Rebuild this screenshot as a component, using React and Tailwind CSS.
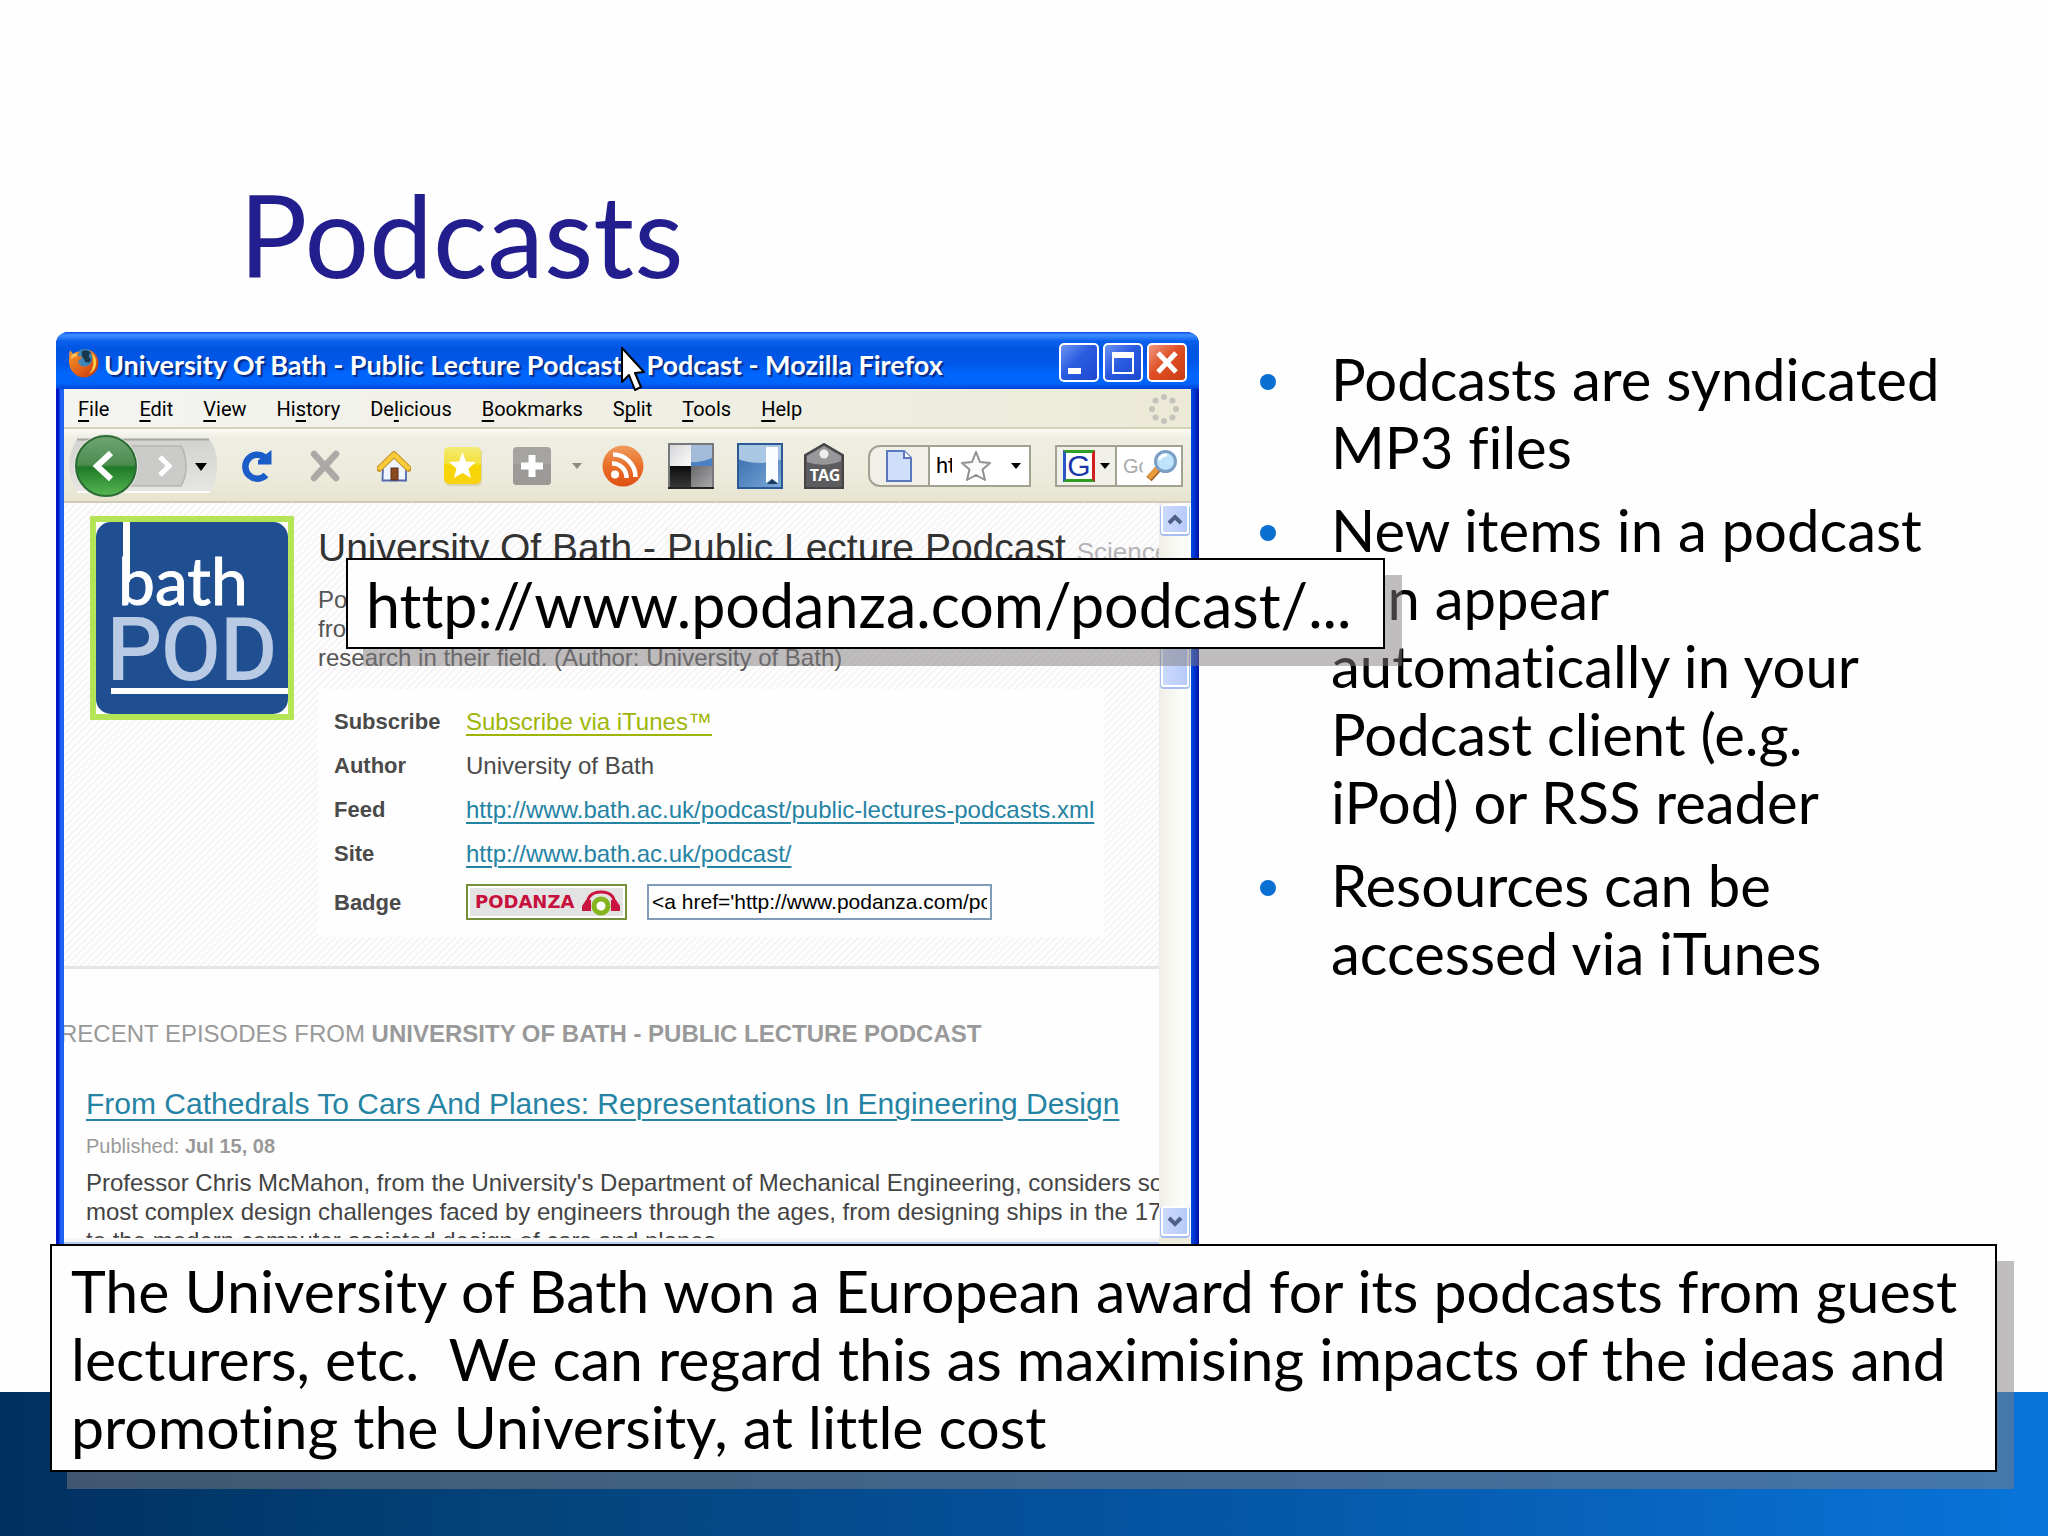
import React from "react";

const slideFont = "font-['Lato',sans-serif] [font-variant-ligatures:none]";
const pageFont = "font-['Liberation_Sans',sans-serif]";

const menus = [
  ["", "F", "ile"],
  ["", "E", "dit"],
  ["", "V", "iew"],
  ["Hi", "s", "tory"],
  ["De", "l", "icious"],
  ["", "B", "ookmarks"],
  ["S", "p", "lit"],
  ["", "T", "ools"],
  ["", "H", "elp"],
];

const bullets = [
  "Podcasts are syndicated MP3 files",
  "New items in a podcast can appear automatically in your Podcast client (e.g. iPod)\u00a0or RSS reader",
  "Resources can be accessed via iTunes",
];

function FirefoxIcon() {
  return (
    <svg viewBox="0 0 32 32" className="h-8 w-8" aria-hidden="true">
      <defs>
        <linearGradient id="fox" x1="0" y1="0" x2="1" y2="1">
          <stop offset="0" stopColor="#f59a2c" />
          <stop offset=".55" stopColor="#e2601a" />
          <stop offset="1" stopColor="#b9330c" />
        </linearGradient>
      </defs>
      <circle cx="17" cy="14" r="12" fill="#3d86b8" />
      <path d="M14 4 q6 -2 9 2 q-3 1 -2 4 q3 2 1 5 q-5 2 -6 -3 q-3 -3 -2 -8z" fill="#17384f" />
      <path d="M2 3 L5 7 Q8 4 12 5 Q9 7 10 9 L14 10 Q14 12 11 13 Q9 15 12 18 Q16 21 21 18 Q25 15 24 9 Q23 5 21 3 Q29 6 30.500 14 Q31 23 24 28 Q16 33 8 28 Q0 22 1 12 Q1 7 2 3z" fill="url(#fox)" />
      <path d="M24 6 Q29 11 28 18 Q27 24 21 27 Q28 19 24 6z" fill="#fbd04a" />
      <path d="M3 12 Q3 8 5 7 Q7 6 9 7 L9 9 Q5 10 3 12z" fill="#fbc35a" />
    </svg>
  );
}

function Cursor() {
  return (
    <svg viewBox="0 0 24 46" className="h-[46px] w-6" aria-hidden="true">
      <path d="M1 1 L1 35 L8 28 L14 43 L20 40 L14 26 L23 25z" fill="#fff" stroke="#000" strokeWidth="2" strokeLinejoin="round" />
    </svg>
  );
}

function TitleBar() {
  const box = "flex h-[39px] w-10 items-center justify-center rounded-[5px] border-2 border-white";
  return (
    <div className="flex h-[57px] items-center bg-[linear-gradient(180deg,#0a4be6_0%,#3c8eff_5%,#2f80fb_9%,#0a60ee_16%,#0054e0_30%,#0058ea_55%,#0066ff_75%,#0064fa_90%,#0043d6_100%)] px-3 pt-1">
      <FirefoxIcon />
      <h2 className="flex gap-6 whitespace-pre pl-1 pt-1 text-[27px] font-bold leading-8 text-white [text-shadow:2px_2px_1px_#052a86]">
        <span>University Of Bath - Public Lecture Podcast</span>
        <span>Podcast - Mozilla Firefox</span>
      </h2>
      <div className="ml-auto flex gap-1">
        <button aria-label="Minimize" className={box + " bg-[linear-gradient(135deg,#6d93f5,#2a5ce0_45%,#1d48cf)]"}>
          <svg viewBox="0 0 36 35" className="h-full w-full"><rect x="7" y="23" width="13" height="6" fill="#fff" /></svg>
        </button>
        <button aria-label="Maximize" className={box + " bg-[linear-gradient(135deg,#6d93f5,#2a5ce0_45%,#1d48cf)]"}>
          <svg viewBox="0 0 36 35" className="h-full w-full"><path d="M8 9h20v19H8z" fill="none" stroke="#fff" strokeWidth="2" /><rect x="7" y="7" width="22" height="6" fill="#fff" /></svg>
        </button>
        <button aria-label="Close" className={box + " bg-[linear-gradient(135deg,#f09a80,#e04f26_45%,#c93d14)]"}>
          <svg viewBox="0 0 36 35" className="h-full w-full"><path d="M9 8 L27 27 M27 8 L9 27" stroke="#fff" strokeWidth="5" /></svg>
        </button>
      </div>
    </div>
  );
}

function Throbber() {
  const dots = [0, 1, 2, 3, 4, 5, 6, 7];
  return (
    <svg viewBox="0 0 32 32" className="ml-auto h-8 w-8" aria-hidden="true">
      {dots.map((n) => (
        <circle key={n} cx={16 + 12 * Math.cos((n * Math.PI) / 4)} cy={16 + 12 * Math.sin((n * Math.PI) / 4)} r="3" fill="#c4c3bb" />
      ))}
    </svg>
  );
}

function MenuBar() {
  return (
    <nav className="flex h-10 items-center gap-[30px] border-b-2 border-[#d5d2b8] bg-[linear-gradient(90deg,#f4f4f1,#efeee3_60%,#ecead6)] pl-[14px] pr-[11px] pt-[2px] font-['Roboto',sans-serif] text-xl text-black">
      {menus.map(([a, k, b]) => (
        <button key={a + k + b} className="leading-6">
          {a}
          <span className="underline decoration-2 underline-offset-4">{k}</span>
          {b}
        </button>
      ))}
      <Throbber />
    </nav>
  );
}

function Caret({ color }) {
  return <svg viewBox="0 0 10 6" className="h-[6px] w-[10px]" aria-hidden="true"><path d="M0 0h10L5 6z" fill={color} /></svg>;
}

function Toolbar() {
  return (
    <div className="flex h-[74px] items-center border-b-2 border-[#cfcbb8] bg-[linear-gradient(180deg,#fbfaf5_0%,#efeee4_12%,#eceada_70%,#e6e3cf_100%)] pl-1 pr-2 pt-[2px]">
      <button aria-label="Back and forward" className="h-16 w-[150px] shrink-0">
        <svg viewBox="0 0 150 64" className="h-full w-full">
          <defs>
            <linearGradient id="back" x1="0" y1="0" x2="0" y2="1">
              <stop offset="0" stopColor="#6fa574" /><stop offset=".48" stopColor="#4b8c4f" />
              <stop offset=".52" stopColor="#1f7a27" /><stop offset="1" stopColor="#56b852" />
            </linearGradient>
            <linearGradient id="pill" x1="0" y1="0" x2="0" y2="1">
              <stop offset="0" stopColor="#d2d2d0" /><stop offset="1" stopColor="#e6e6e2" />
            </linearGradient>
          </defs>
          <path d="M9 5 H141 Q149 14 149 31 Q149 48 142 58 H9 Q-7 32 9 5z" fill="url(#pill)" />
          <path d="M9 5.500 H141" stroke="#a5a5a2" strokeWidth="2" />
          <path d="M9 58 H142" stroke="#fbfbf8" strokeWidth="2" />
          <path d="M60 12 H113 Q118 20 118 32 Q118 44 113 52 H60z" fill="#cbcbc9" stroke="#b5b5b3" strokeWidth="1.500" />
          <path d="M92 23 L101 32 L92 41" fill="none" stroke="#fff" strokeWidth="5" />
          <circle cx="38" cy="32" r="32" fill="#e4e4e1" />
          <circle cx="38" cy="32" r="30" fill="url(#back)" stroke="#2c6b33" strokeWidth="2" />
          <path d="M43 19 L29 32 L43 45" fill="none" stroke="#fff" strokeWidth="6" />
          <path d="M127 29h12l-6 8z" fill="#000" />
        </svg>
      </button>
      <button aria-label="Reload" className="ml-[22px] shrink-0">
        <svg viewBox="0 0 32 32" className="h-8 w-8">
          <path d="M26 25 A12 12 0 1 1 24.500 7" fill="none" stroke="#1a5cc8" strokeWidth="6.500" />
          <path d="M31.500 0 V14.500 H18 V10.500z" fill="#1a5cc8" />
        </svg>
      </button>
      <button aria-label="Stop" className="ml-[38px] shrink-0">
        <svg viewBox="0 0 30 32" className="h-8 w-[30px]"><path d="M4 4 L26 28 M26 4 L4 28" stroke="#aaa9a5" strokeWidth="6.500" strokeLinecap="round" /></svg>
      </button>
      <button aria-label="Home" className="ml-[37px] shrink-0">
        <svg viewBox="0 0 34 32" className="h-8 w-[34px]">
          <path d="M6 16 L17 6 L29 16 V30.500 H5.500z" fill="#eff6ff" stroke="#4f67b0" strokeWidth="1.800" />
          <rect x="14" y="18" width="7" height="12" fill="#8a4b1e" stroke="#5c2f12" />
          <path d="M2.500 18.500 L17 4.500 L31.500 18.500" fill="none" stroke="#c8922a" strokeWidth="6.500" strokeLinejoin="round" strokeLinecap="round" />
          <path d="M3 18 L17 4.500 L31 18" fill="none" stroke="#f8cb3b" strokeWidth="4.500" strokeLinejoin="round" strokeLinecap="round" />
        </svg>
      </button>
      <button aria-label="Bookmark star" className="ml-[33px] shrink-0">
        <svg viewBox="0 0 38 40" className="h-10 w-[38px]">
          <defs><linearGradient id="gold" x1="0" y1="0" x2="0" y2="1"><stop offset="0" stopColor="#f3ea74" /><stop offset=".45" stopColor="#f4e13a" /><stop offset=".5" stopColor="#f6d500" /><stop offset="1" stopColor="#f9d312" /></linearGradient></defs>
          <rect x="1" y="2" width="37" height="38" rx="5" fill="#d9d4b0" />
          <rect x="0" y="1" width="37" height="37" rx="5" fill="url(#gold)" />
          <path d="M18.500 6 L22 15.500 L32 16 L24.500 22.500 L27 32 L18.500 27 L10 32 L12.500 22.500 L5 16 L15 15.500z" fill="#fff" />
        </svg>
      </button>
      <button aria-label="Add" className="ml-[31px] shrink-0">
        <svg viewBox="0 0 38 38" className="h-[38px] w-[38px]">
          <rect width="38" height="38" rx="4" fill="#a5a4a0" />
          <rect y="17" width="38" height="21" rx="4" fill="#9b9a96" />
          <path d="M19 8 V30 M8 19 H30" stroke="#fff" strokeWidth="7" />
        </svg>
      </button>
      <button aria-label="Add options" className="ml-[21px] shrink-0"><Caret color="#8d8d85" /></button>
      <button aria-label="Subscribe to feed" className="ml-5 shrink-0">
        <svg viewBox="0 0 42 42" className="h-[42px] w-[42px]">
          <defs><linearGradient id="rss" x1="0" y1="0" x2="0" y2="1"><stop offset="0" stopColor="#f09a5b" /><stop offset=".5" stopColor="#e9702a" /><stop offset="1" stopColor="#df4f12" /></linearGradient></defs>
          <circle cx="21" cy="21" r="20.500" fill="url(#rss)" />
          <circle cx="13" cy="29.500" r="4" fill="#fff" />
          <path d="M10 18.500 A14 14 0 0 1 24.500 33 M11 9.500 A22.500 22.500 0 0 1 33.500 32" fill="none" stroke="#fff" strokeWidth="4.500" />
        </svg>
      </button>
      <button aria-label="Delicious" className="ml-6 shrink-0">
        <svg viewBox="0 0 46 46" className="h-[46px] w-[46px]">
          <defs>
            <linearGradient id="dl1" x1="0" y1="0" x2="1" y2="1"><stop offset="0" stopColor="#d2d3d6" /><stop offset="1" stopColor="#fafafa" /></linearGradient>
            <linearGradient id="dl2" x1="0" y1="0" x2="0" y2="1"><stop offset="0" stopColor="#0c0c0d" /><stop offset="1" stopColor="#3c3c3f" /></linearGradient>
            <linearGradient id="dl3" x1="0" y1="0" x2="1" y2="1"><stop offset="0" stopColor="#68686b" /><stop offset="1" stopColor="#b0b0b2" /></linearGradient>
          </defs>
          <rect width="23" height="23" fill="url(#dl1)" /><rect x="23" width="23" height="23" fill="#4b80c4" />
          <path d="M23 0h23v14q-12 6 -23 5z" fill="#a3bcd9" />
          <rect y="23" width="23" height="23" fill="url(#dl2)" /><rect x="23" y="23" width="23" height="23" fill="url(#dl3)" />
          <path d="M1 46 V1 H45 V46" fill="none" stroke="#77787c" strokeWidth="2" />
          <path d="M0 45 H46" stroke="#222" strokeWidth="2" />
        </svg>
      </button>
      <button aria-label="My bookmarks" className="ml-[23px] shrink-0">
        <svg viewBox="0 0 46 46" className="h-[46px] w-[46px]">
          <defs><linearGradient id="book" x1="0" y1="0" x2="1" y2="1"><stop offset="0" stopColor="#2f66a8" /><stop offset="1" stopColor="#7dabda" /></linearGradient></defs>
          <rect width="46" height="46" fill="url(#book)" />
          <path d="M0 0h46v16q-22 8 -46 0z" fill="#a9c6e2" />
          <path d="M29 4h12v36l-6 -4 -6 4z" fill="#fafcff" /><path d="M30 41l5 -5 6 5z" fill="#1c3b63" />
          <rect x="1" y="1" width="44" height="44" fill="none" stroke="#2b5a94" strokeWidth="2" />
        </svg>
      </button>
      <button aria-label="Tag" className="ml-[21px] shrink-0">
        <svg viewBox="0 0 40 46" className="h-[46px] w-10">
          <path d="M1 45 V12 L20 1 L39 12 V45z" fill="#5c5c5f" stroke="#444447" strokeWidth="2" />
          <path d="M3 13 L20 3 L37 13 V18 Q20 25 3 19z" fill="#98989b" />
          <circle cx="20" cy="11" r="4.500" fill="#eee" />
          <text x="21" y="38" textAnchor="middle" fill="#fff" fontFamily="Noto Sans, sans-serif" fontWeight="700" fontSize="16">TAG</text>
        </svg>
      </button>
      <div className="ml-6 flex h-[42px] min-w-0 flex-1 items-center rounded-l-[12px] border-2 border-[#a3a192] bg-[#f1f0e8]">
        <span className="flex w-[58px] shrink-0 justify-center">
          <svg viewBox="0 0 26 32" className="h-8 w-[26px]" aria-hidden="true">
            <path d="M1 1H18L25 8V31H1z" fill="#cfdffa" stroke="#5b78bd" strokeWidth="2" />
            <path d="M18 1V8H25" fill="#fff" stroke="#5b78bd" strokeWidth="2" />
          </svg>
        </span>
        <div className="flex h-full min-w-0 flex-1 items-center border-l-2 border-[#a3a192] bg-white pl-[6px]">
          <input aria-label="Address" defaultValue="http://www.podanza.com/podcast/" className="w-4 shrink-0 font-['Roboto',sans-serif] text-[22px] leading-6 text-black outline-none" />
          <svg viewBox="0 0 32 32" className="ml-2 h-8 w-8 shrink-0" aria-hidden="true">
            <path d="M16 2 L20 12 L30 13 L22.500 19.500 L25 30 L16 25 L7 30 L9.500 19.500 L2 13 L12 12z" fill="#fdfdfd" stroke="#8f8f8c" strokeWidth="2" strokeLinejoin="round" />
          </svg>
          <span className="ml-auto mr-2"><Caret color="#000" /></span>
        </div>
      </div>
      <div className="ml-6 flex h-[42px] w-[128px] shrink-0 items-center border-2 border-[#a3a192] bg-[#f1f0e8]">
        <button aria-label="Search engine" className="flex w-[58px] shrink-0 items-center gap-[5px] pl-[6px]">
          <span className="flex h-8 w-8 items-center justify-center border-[3px] border-b-[#2f9e22] border-l-[#2b56c6] border-r-[#d21f1f] border-t-[#2f9e22] bg-white font-['Liberation_Sans',sans-serif] text-[30px] leading-7 text-[#1b36a8]">G</span>
          <Caret color="#000" />
        </button>
        <div className="flex h-full flex-1 items-center justify-between border-l-2 border-[#a3a192] bg-white pl-[6px] pr-[3px]">
          <input aria-label="Search" placeholder="Google" className="w-5 font-['Liberation_Sans',sans-serif] text-xl leading-6 outline-none placeholder:text-[#a9a9a9]" />
          <svg viewBox="0 0 34 34" className="h-[34px] w-[34px]" aria-hidden="true">
            <path d="M14 20 L5 30" stroke="#9a5b20" strokeWidth="7" />
            <path d="M14 19 L5 29" stroke="#eb9a3c" strokeWidth="5" />
            <circle cx="21.500" cy="12.500" r="10" fill="#bfe3fa" stroke="#7b9fc4" strokeWidth="3" />
            <path d="M15 11 Q17 6 23 6" stroke="#fff" strokeWidth="3" fill="none" />
          </svg>
        </div>
      </div>
    </div>
  );
}

function BathPodLogo() {
  return (
    <div className="h-[204px] w-[204px] shrink-0 border-[6px] border-[#b4e556] bg-white">
      <svg viewBox="0 0 192 192" className="h-full w-full" role="img" aria-label="bath POD">
        <rect width="192" height="192" rx="15" fill="#1f4f91" />
        <rect x="27" y="0" width="7" height="60" fill="#fff" />
        <text x="22" y="83" fill="#fff" stroke="#fff" fontFamily="Lato, sans-serif" fontSize="66">bath</text>
        <text x="11" y="157" fill="#b9cae5" stroke="#b9cae5" strokeWidth="2" fontFamily="Roboto, sans-serif" fontSize="86">POD</text>
        <rect x="15" y="166" width="177" height="6" fill="#fff" />
      </svg>
    </div>
  );
}

function PodanzaBadge() {
  return (
    <a href="#podanza" className="flex h-9 w-[161px] shrink-0 items-center justify-between border-2 border-[#76903a] bg-[#e3e3e3] pl-[7px] pr-1 outline-2 -outline-offset-4 outline-white">
      <span className="font-['DejaVu_Sans',sans-serif] text-lg font-bold leading-5 text-[#c8103c]">PODANZA</span>
      <svg viewBox="0 0 40 28" className="h-7 w-10" aria-hidden="true">
        <path d="M6 20 Q5 4 20 4 Q35 4 34 20" fill="none" stroke="#c8143f" strokeWidth="3" />
        <path d="M1 18 L5 12 H10 V23 H1z M39 18 L35 12 H30 V23 H39z" fill="#c8143f" />
        <circle cx="20" cy="18" r="7" fill="#fff" stroke="#85b51e" strokeWidth="5" />
      </svg>
    </a>
  );
}

function Details() {
  const link = "underline decoration-2 underline-offset-4";
  const label = "w-[132px] text-left text-[22px] font-bold";
  return (
    <table className="mt-[17px] w-[786px] border-separate border-spacing-0 bg-[#fefefe] pb-2 pl-4 pt-[10px] text-2xl leading-[29px] text-[#4a4a4a]">
      <tbody>
        <tr className="h-11"><th scope="row" className={label}>Subscribe</th><td><a href="#itunes" className={link + " text-[#9fb608]"}>Subscribe via iTunes™</a></td></tr>
        <tr className="h-11"><th scope="row" className={label}>Author</th><td>University of Bath</td></tr>
        <tr className="h-11"><th scope="row" className={label}>Feed</th><td><a href="#feed" className={link + " text-[#2583a3]"}>http://www.bath.ac.uk/podcast/public-lectures-podcasts.xml</a></td></tr>
        <tr className="h-11"><th scope="row" className={label}>Site</th><td><a href="#site" className={link + " text-[#2583a3]"}>http://www.bath.ac.uk/podcast/</a></td></tr>
        <tr className="h-[54px]">
          <th scope="row" className={label}>Badge</th>
          <td>
            <div className="flex gap-5">
              <PodanzaBadge />
              <input aria-label="Badge code" readOnly value="<a href='http://www.podanza.com/podcast/" className="h-9 w-[345px] border-2 border-[#7f9db9] bg-white px-[3px] text-[21px] text-black outline-none" />
            </div>
          </td>
        </tr>
      </tbody>
    </table>
  );
}

function Scrollbar() {
  const thumb = "rounded-[3px] border-2 border-white bg-[linear-gradient(90deg,#cbd9fd,#b7cafa)] shadow-[0_1px_0_1px_#a5bdf0]";
  return (
    <div className="flex w-8 shrink-0 flex-col bg-[linear-gradient(90deg,#efeee6,#fbfbf6_60%,#fefefe)] px-[2px] pt-[1px]">
      <button aria-label="Scroll up" className={"flex h-[30px] items-center justify-center " + thumb}>
        <svg viewBox="0 0 16 11" className="h-[11px] w-4"><path d="M2 9 L8 3 L14 9" fill="none" stroke="#4d6185" strokeWidth="4" /></svg>
      </button>
      <div className={"mt-[60px] h-[93px] " + thumb} />
      <button aria-label="Scroll down" className={"mt-auto mb-[2px] flex h-[30px] items-center justify-center " + thumb}>
        <svg viewBox="0 0 16 11" className="h-[11px] w-4"><path d="M2 2 L8 8 L14 2" fill="none" stroke="#4d6185" strokeWidth="4" /></svg>
      </button>
    </div>
  );
}

function WebPage() {
  return (
    <div className={"flex h-[735px] " + pageFont}>
      <div className="min-w-0 flex-1 overflow-hidden whitespace-nowrap bg-[#fefefe]">
        <section className="flex gap-6 border-b-[3px] border-[#e6e4e7] bg-[repeating-linear-gradient(135deg,#fefdfe_0px,#fefdfe_3px,#f0edf0_4px,#fefdfe_5px)] pb-[29px] pl-[26px] pt-[13px]">
          <BathPodLogo />
          <div className="min-w-0">
            <h3 className="mt-[8px] text-[39px] leading-[48px] text-[#333]">
              University Of Bath - Public Lecture Podcast <span className="text-[26px] text-[#b5b3b6]">Science</span>
            </h3>
            <p className="mt-[9px] text-2xl leading-[29px] text-[#555]">
              Podcasts
              <br />
              from
              <br />
              research in their field. (Author: University of Bath)
            </p>
            <Details />
          </div>
        </section>
        <h3 className="-ml-1 mt-[50px] text-2xl leading-[29px] text-[#999]">
          RECENT EPISODES FROM <b>UNIVERSITY OF BATH - PUBLIC LECTURE PODCAST</b>
        </h3>
        <article className="pl-[22px]">
          <h4 className="mt-[38px] text-[30px] leading-9">
            <a href="#episode" className="text-[#2583a3] underline decoration-2 underline-offset-[5px]">
              From Cathedrals To Cars And Planes: Representations In Engineering Design
            </a>
          </h4>
          <p className="mt-3 text-xl leading-6 text-[#999]">
            Published: <b>Jul 15, 08</b>
          </p>
          <p className="mt-[10px] text-2xl leading-[29px] text-[#444]">
            Professor Chris McMahon, from the University's Department of Mechanical Engineering, considers some of the
            <br />
            most complex design challenges faced by engineers through the ages, from designing ships in the 17th
            <br />
            to the modern computer assisted design of cars and planes.
          </p>
        </article>
      </div>
      <Scrollbar />
    </div>
  );
}

function BrowserWindow() {
  return (
    <div className="relative min-w-0">
      <div className="flex h-full flex-col rounded-t-[12px] bg-[linear-gradient(90deg,#0019c8_0px,#0019c8_3px,#1c63f5_4px,#1c63f5_8px,#0046dc_9px,#0046dc_calc(100%_-_7px),#0028c8_calc(100%_-_3px),#00109a_100%)]">
        <div className="overflow-hidden rounded-t-[12px]">
          <TitleBar />
        </div>
        <div className="mx-2 flex flex-1 flex-col bg-[#ecead8]">
          <MenuBar />
          <Toolbar />
          <WebPage />
          <div className="mr-8 h-[6px] border-b-2 border-[#b7c8f5] bg-[#f6f6f4]" />
        </div>
      </div>
      <div className="absolute left-[565px] top-[15px]">
        <Cursor />
      </div>
      <p className="absolute left-[290px] top-[226px] w-[1039px] whitespace-nowrap border-2 border-black bg-[#fefefe] pb-2 pl-[18px] pt-[11px] text-[61px] leading-[68px] text-black shadow-[17px_17px_0_rgba(128,124,126,0.5)]">
        http://www.podanza.com/podcast/...
      </p>
    </div>
  );
}

export default function App() {
  return (
    <div className={"flex min-h-screen flex-col overflow-hidden bg-[#fefefe] " + slideFont}>
      <h1 className="pb-[31px] pl-[239px] pt-[167px] text-[114px] leading-[134px] text-[#221e8d]">Podcasts</h1>
      <main className="grid grid-cols-[1143fr_849fr] pl-14">
        <BrowserWindow />
        <ul className="flex min-w-0 flex-col gap-[15px] pl-[61px] pr-[90px] pt-[13px] text-[58px] leading-[68px] text-black">
          {bullets.map((b) => (
            <li key={b} className="flex">
              <span className="w-[71px] shrink-0 pt-[29px]">
                <span className="block h-4 w-4 rounded-full bg-[#0a6fd0]" />
              </span>
              <span>{b}</span>
            </li>
          ))}
        </ul>
      </main>
      <section className="relative flex-1 pb-16 pl-[50px] pr-[51px]">
        <div className="absolute inset-x-0 bottom-0 h-36 bg-[linear-gradient(90deg,#003060,#044379_25%,#04509a_50%,#0761b8_75%,#0874da)]" />
        <p className="relative border-2 border-black bg-[#fefefe] pb-[9px] pl-[19px] pt-[11px] text-[59px] leading-[68px] text-black shadow-[17px_17px_0_rgba(128,124,126,0.5)]">
          The University of Bath won a European award for its podcasts from guest lecturers, etc.&nbsp; We can regard this as
          maximising impacts of the ideas and promoting the University, at little cost
        </p>
      </section>
    </div>
  );
}
